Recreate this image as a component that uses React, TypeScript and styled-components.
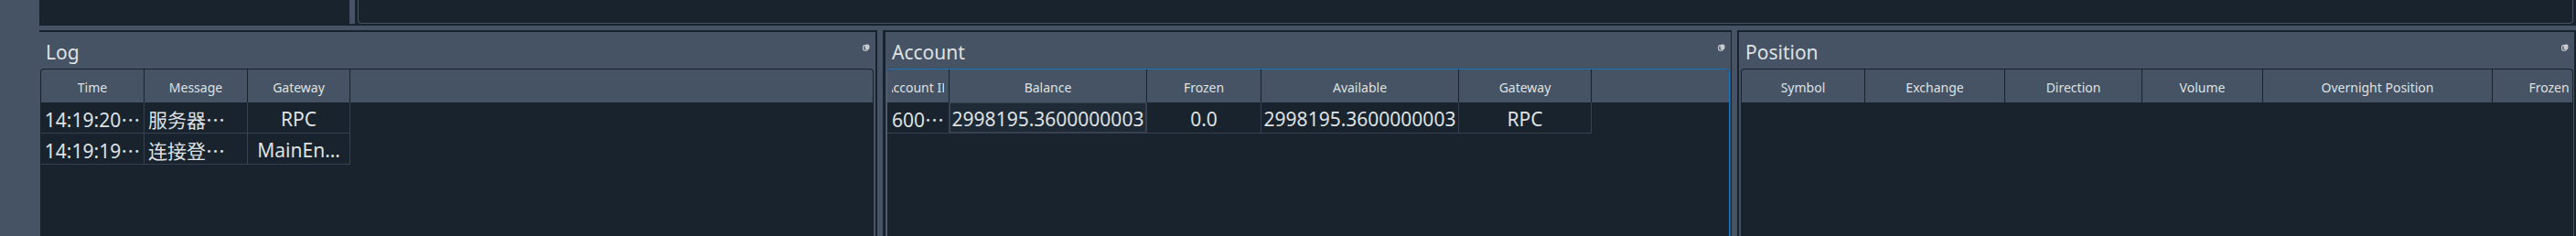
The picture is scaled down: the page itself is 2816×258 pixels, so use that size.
import styled, { createGlobalStyle } from "styled-components";

const BG = "#19232D";
const PANEL = "#455364";
const GRID = "#37414F";
const TEXT = "#DFE1E2";
const ACCENT = "#1A72BB";

const GlobalStyle = createGlobalStyle`
    html, body{
        margin: 0;
        padding: 0;
        background: ${BG};
        overflow: hidden;
    }
    *{
        box-sizing: border-box;
    }
`;

const Window = styled.div`
    width: 2816px;
    height: 258px;
    display: flex;
    background: ${BG};
    font-family: "Noto Sans", "Noto Sans CJK SC", sans-serif;
    color: ${TEXT};
`;
const SideBar = styled.div`
    width: 43px;
    flex-shrink: 0;
    background: ${PANEL};
`;
const Main = styled.div`
    flex: 1;
    display: flex;
    flex-direction: column;
    min-width: 0;
`;
const TopArea = styled.div`
    height: 28px;
    display: flex;
    align-items: flex-start;
    flex-shrink: 0;
`;
const TopPane = styled.div`
    width: 339px;
    height: 26px;
`;
const TopEditor = styled.div`
    flex: 1;
    height: 26px;
    margin: 0 3px 0 3px;
    border: 1px solid ${PANEL};
    border-top: none;
    border-radius: 0 0 4px 4px;
`;
const Splitter = styled.div<{ $left: number; $right: number; $height?: number }>`
    width: ${p => p.$left + p.$right + 6}px;
    height: ${p => (p.$height ? `${p.$height}px` : "auto")};
    align-self: ${p => (p.$height ? "flex-start" : "stretch")};
    flex-shrink: 0;
    background: ${PANEL};
    border-left: ${p => p.$left}px solid ${BG};
    border-right: ${p => p.$right}px solid ${BG};
`;
const HSep = styled.div`
    height: 5px;
    flex-shrink: 0;
    background: ${PANEL};
`;
const DockRow = styled.div`
    flex: 1;
    display: flex;
    min-height: 0;
`;
const Dock = styled.div<{ $w: number }>`
    width: ${p => p.$w}px;
    flex-shrink: 0;
    display: flex;
    flex-direction: column;
    padding-top: 2px;
`;
const DockTitle = styled.div`
    height: 40px;
    flex-shrink: 0;
    background: ${PANEL};
    display: flex;
    align-items: center;
    justify-content: space-between;
    padding: 0 6px 0 7px;
`;
const TitleText = styled.span`
    font-size: 21px;
    line-height: 40px;
    padding-top: 4px;
`;
const FloatBtn = styled.svg`
    width: 8px;
    height: 8px;
    margin-top: -6px;
`;
const DockBody = styled.div<{ $pl: number; $pr: number }>`
    flex: 1;
    display: flex;
    background: ${PANEL};
    padding: 0 ${p => p.$pr}px 0 ${p => p.$pl}px;
    min-height: 0;
`;
const TableFrame = styled.div<{ $focused?: boolean }>`
    flex: 1;
    min-width: 0;
    background: ${BG};
    border: 1px solid ${p => (p.$focused ? ACCENT : BG)};
    border-bottom: none;
    border-radius: 4px 4px 0 0;
    overflow: hidden;
`;
const HeaderRow = styled.div`
    height: 36px;
    display: flex;
    background: ${PANEL};
`;
const HeaderCell = styled.div<{ $w: number }>`
    width: ${p => p.$w}px;
    flex-shrink: 0;
    display: flex;
    align-items: center;
    justify-content: center;
    padding-top: 3px;
    font-size: 14px;
    border-right: 1px solid ${BG};
`;
const HeaderClip = styled.div`
    width: calc(100% - 10px);
    display: flex;
    justify-content: center;
    overflow: hidden;
    white-space: nowrap;
`;
const HeaderText = styled.span`
    flex-shrink: 0;
`;
const DataRow = styled.div`
    height: 34px;
    display: flex;
`;
const Cell = styled.div<{ $w: number; $align?: "left" | "center"; $current?: boolean }>`
    width: ${p => p.$w}px;
    flex-shrink: 0;
    display: flex;
    align-items: center;
    justify-content: ${p => (p.$align === "left" ? "flex-start" : "center")};
    padding-left: ${p => (p.$align === "left" ? "4px" : "0")};
    padding-top: 2px;
    overflow: hidden;
    white-space: nowrap;
    font-size: 21px;
    border-right: 1px solid ${GRID};
    border-bottom: 1px solid ${GRID};
    background: ${p => (p.$current ? "#1E2A36" : "transparent")};
    box-shadow: ${p => (p.$current ? `inset 0 0 0 1px ${GRID}` : "none")};
`;

interface Column {
    title: string
    width: number
    align?: "left" | "center"
}
interface TableProps {
    columns: Column[]
    rows: string[][]
    focused?: boolean
    current?: [number, number]
}
function Table({ columns, rows, focused, current }: TableProps) {
    return (
        <TableFrame $focused={focused}>
            <HeaderRow>
                {columns.map(c => (
                    <HeaderCell key={c.title} $w={c.width}>
                        <HeaderClip>
                            <HeaderText>{c.title}</HeaderText>
                        </HeaderClip>
                    </HeaderCell>
                ))}
            </HeaderRow>
            {rows.map((r, i) => (
                <DataRow key={i}>
                    {r.map((v, j) => (
                        <Cell
                            key={j}
                            $w={columns[j].width}
                            $align={columns[j].align}
                            $current={!!current && current[0] === i && current[1] === j}
                        >
                            {v}
                        </Cell>
                    ))}
                </DataRow>
            ))}
        </TableFrame>
    );
}

function FloatIcon() {
    return (
        <FloatBtn viewBox="0 0 8 8">
            <rect x="0.6" y="1.6" width="5" height="5.6" rx="1.6" fill="none" stroke="#C8CCD0" strokeWidth="1.2" />
            <rect x="2.6" y="0.6" width="4.8" height="5.4" rx="1.6" fill="#C8CCD0" />
        </FloatBtn>
    );
}

interface DockProps {
    title: string
    width: number
    pl: number
    pr: number
    children: React.ReactNode
}
function DockPanel({ title, width, pl, pr, children }: DockProps) {
    return (
        <Dock $w={width}>
            <DockTitle>
                <TitleText>{title}</TitleText>
                <FloatIcon />
            </DockTitle>
            <DockBody $pl={pl} $pr={pr}>{children}</DockBody>
        </Dock>
    );
}

const logColumns: Column[] = [
    { title: "Time", width: 113 },
    { title: "Message", width: 113, align: "left" },
    { title: "Gateway", width: 112 },
];
const logRows = [
    ["14:19:20⋯", "服务器⋯", "RPC"],
    ["14:19:19⋯", "连接登⋯", "MainEn…"],
];

const accountColumns: Column[] = [
    { title: "Account ID", width: 68 },
    { title: "Balance", width: 216 },
    { title: "Frozen", width: 125 },
    { title: "Available", width: 216 },
    { title: "Gateway", width: 145 },
];
const accountRows = [
    ["600⋯", "2998195.3600000003", "0.0", "2998195.3600000003", "RPC"],
];

const positionColumns: Column[] = [
    { title: "Symbol", width: 135 },
    { title: "Exchange", width: 153 },
    { title: "Direction", width: 150 },
    { title: "Volume", width: 132 },
    { title: "Overnight Position", width: 251 },
    { title: "Frozen", width: 124 },
];

export default function App() {
    return (
        <>
            <GlobalStyle />
            <Window>
                <SideBar />
                <Main>
                    <TopArea>
                        <TopPane />
                        <Splitter $left={0} $right={0} $height={26} />
                        <TopEditor />
                    </TopArea>
                    <HSep />
                    <DockRow>
                        <DockPanel title="Log" width={914} pl={1} pr={2}>
                            <Table columns={logColumns} rows={logRows} />
                        </DockPanel>
                        <Splitter $left={2} $right={3} />
                        <DockPanel title="Account" width={924} pl={1} pr={1}>
                            <Table columns={accountColumns} rows={accountRows} focused current={[0, 1]} />
                        </DockPanel>
                        <Splitter $left={1} $right={2} />
                        <DockPanel title="Position" width={913} pl={2} pr={1}>
                            <Table columns={positionColumns} rows={[]} />
                        </DockPanel>
                    </DockRow>
                </Main>
            </Window>
        </>
    );
}
